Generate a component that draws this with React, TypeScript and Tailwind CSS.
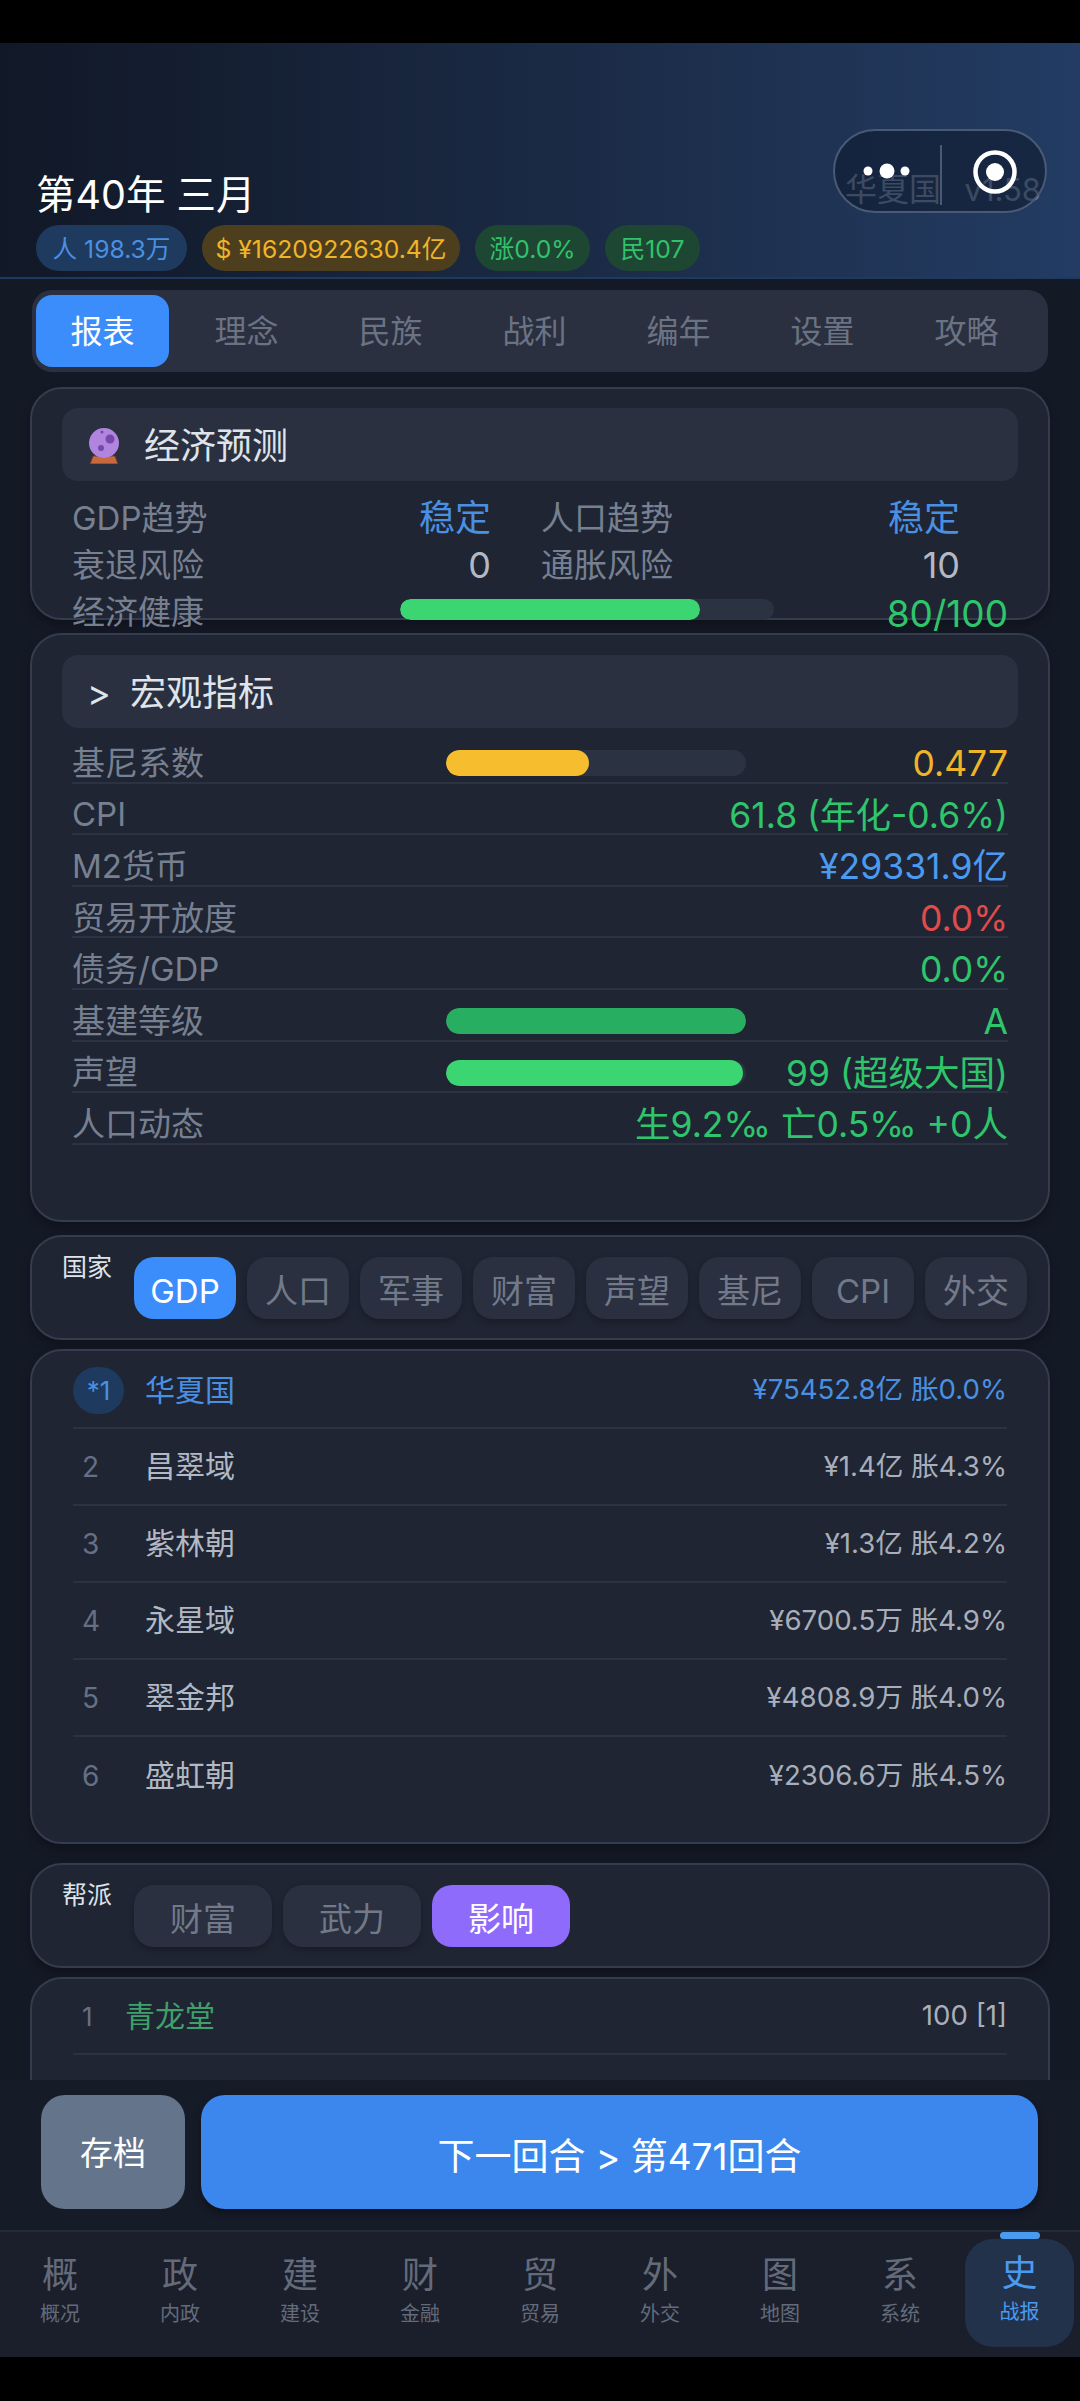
const CJK = "font-['Inter','Noto_Sans_CJK_SC',sans-serif]";

function Pill({ className, children }: { className: string; children: React.ReactNode }) {
  return <div className={`h-[46px] rounded-[23px] flex items-center justify-center text-[24.7px] pt-[3px] ${className}`}>{children}</div>;
}

function Bar({ width, fill, color, h }: { width: number; fill: number; color: string; h: string }) {
  return (
    <div className={`rounded-full bg-[#2b3242] overflow-hidden ${h}`} style={{ width }}>
      <div className={`h-full rounded-full ${color}`} style={{ width: fill }} />
    </div>
  );
}

function Metric({ label, value, color, bar }: { label: string; value: string; color: string; bar?: React.ReactNode }) {
  return (
    <div className="h-[51.6px] pt-[13px] border-b-2 border-[#2b3242] flex items-center text-[33px] leading-none">
      <div className="w-[374px] text-[#778091] shrink-0">{label}</div>
      {bar}
      <div className={`ml-auto text-[35.5px] pt-[1px] ${color}`}>{value}</div>
    </div>
  );
}

function Chip({ label, active, w, tone }: { label: string; active?: boolean; w: string; tone?: string }) {
  return (
    <div className={`h-[62px] rounded-[20px] flex items-center justify-center text-[33px] leading-none shrink-0 ${w} ${active ? `${tone} text-white` : "bg-[#2a3040] text-[#727a8a] shadow-[0_3px_6px_rgba(0,0,0,0.25)]"}`}>
      <span className="pt-[6px]">{label}</span>
    </div>
  );
}

function Rank({ n, name, value }: { n: number; name: string; value: string }) {
  return (
    <div className="h-[77px] border-b-2 border-[#2b3242] last:border-b-0 flex items-center">
      <div className="w-[72px] pl-[9px] text-[28px] text-[#667084]">{n}</div>
      <div className="text-[30px] text-[#b3b9c4]">{name}</div>
      <div className="ml-auto text-[27.6px] text-[#a8afbb]">{value}</div>
    </div>
  );
}

const tabs = ["理念", "民族", "战利", "编年", "设置", "攻略"];
const chips = ["人口", "军事", "财富", "声望", "基尼", "CPI", "外交"];
const ranks = [
  { n: 2, name: "昌翠域", value: "¥1.4亿 胀4.3%" },
  { n: 3, name: "紫林朝", value: "¥1.3亿 胀4.2%" },
  { n: 4, name: "永星域", value: "¥6700.5万 胀4.9%" },
  { n: 5, name: "翠金邦", value: "¥4808.9万 胀4.0%" },
  { n: 6, name: "盛虹朝", value: "¥2306.6万 胀4.5%" },
];
const nav = [
  ["概", "概况"], ["政", "内政"], ["建", "建设"], ["财", "金融"], ["贸", "贸易"], ["外", "外交"], ["图", "地图"], ["系", "系统"],
];

export default function App() {
  return (
    <div className={`w-[1080px] h-[2401px] bg-black flex flex-col overflow-hidden font-normal ${CJK}`}>
      <div className="h-[43px] shrink-0 bg-black" />

      <header className="relative h-[236px] shrink-0 bg-gradient-to-r from-[#111827] to-[#233c63] border-b-2 border-[#1f3a60] px-[36px] pt-[127px]">
        <div className="text-[39.5px] leading-[50px] text-white">第40年 三月</div>
        <div className="mt-[5px] flex gap-[15px]">
          <Pill className="w-[151px] bg-[#1e3a5f] text-[#4a90e2]">人 198.3万</Pill>
          <Pill className="w-[258px] bg-[#4d3f1e] text-[#f0b429]">$ ¥1620922630.4亿</Pill>
          <Pill className="w-[115px] bg-[#1d4733] text-[#31c26b]">涨0.0%</Pill>
          <Pill className="w-[95px] bg-[#1d4733] text-[#31c26b]">民107</Pill>
        </div>
        <div className="absolute left-[845px] top-[127px] w-[196px] flex justify-between text-[32px] leading-[40px] text-[#8093ae] whitespace-nowrap">
          <span>华夏国</span>
          <span className="text-[31px]">v1.58</span>
        </div>
        <div className="absolute left-[833px] top-[86px] w-[214px] h-[84px] rounded-[42px] border-2 border-[#4a5a75] bg-[#0f1a2e]/60">
          <div className="absolute left-[105px] top-[14px] w-[2px] h-[60px] bg-[#4a5a75]" />
          <svg className="absolute left-0 top-0" width="210" height="80" viewBox="0 0 210 80">
            <circle cx="33" cy="40" r="4.5" fill="#fff" />
            <circle cx="52" cy="40" r="7.5" fill="#fff" />
            <circle cx="70" cy="40" r="4.5" fill="#fff" />
            <circle cx="160" cy="41" r="19.5" fill="none" stroke="#fff" strokeWidth="4.5" />
            <circle cx="160" cy="41" r="9" fill="#fff" />
          </svg>
        </div>
      </header>

      <main className="h-[1801px] shrink-0 bg-[#141926] overflow-hidden px-[30px] pt-[11px]">
        <div className="mx-[2px] h-[82px] rounded-[20px] bg-[#2a3040] pl-[4px] flex items-center gap-[11px] text-[32px]">
          <div className="w-[133px] h-[72px] rounded-[16px] bg-[#3a8dfb] text-white flex items-center justify-center pt-[2px]">报表</div>
          {tabs.map((t) => (
            <div key={t} className="w-[133px] text-center text-[#6b7383] pt-[2px]">{t}</div>
          ))}
        </div>

        <section className="mt-[15px] h-[233px] rounded-[32px] border-2 border-[#353c4d] bg-[#1f2533] px-[30px] pt-[19px] shadow-[0_6px_10px_rgba(0,0,0,0.25)]">
          <div className="h-[73px] rounded-[16px] bg-[#2a3040] flex items-center pl-[27px] pt-[2px] text-[#dfe3ea] text-[36px]">
            <svg width="30" height="36" viewBox="0 0 30 36" className="mr-[25px]">
              <path d="M4 28h22l3 8H1z" fill="#c9683f" stroke="#6b3a2a" strokeWidth="1" />
              <circle cx="15" cy="15" r="15" fill="#b085dd" />
              <circle cx="21" cy="11" r="4.5" fill="#7747ac" />
              <circle cx="12" cy="20" r="3" fill="#7747ac" />
              <circle cx="13" cy="4" r="1.5" fill="#7747ac" />
            </svg>
            经济预测
          </div>
          <div className="px-[10px] pt-[14px] text-[33px] leading-[47px]">
            <div className="grid grid-cols-2 gap-x-[50px] pr-[48px]">
              <div className="flex justify-between"><span className="text-[#778091]">GDP趋势</span><span className="text-[36px] text-[#4a90e2]">稳定</span></div>
              <div className="flex justify-between"><span className="text-[#778091]">人口趋势</span><span className="text-[36px] text-[#4a90e2]">稳定</span></div>
              <div className="flex justify-between"><span className="text-[#778091]">衰退风险</span><span className="text-[36px] text-[#b3b9c4]">0</span></div>
              <div className="flex justify-between"><span className="text-[#778091]">通胀风险</span><span className="text-[36px] text-[#b3b9c4]">10</span></div>
            </div>
            <div className="flex items-center h-[46px]">
              <div className="w-[328px] text-[#778091]">经济健康</div>
              <div className="-mt-[6px]"><Bar width={374} fill={300} color="bg-[#3bd671]" h="h-[21px]" /></div>
              <div className="ml-auto text-[37px] text-[#2ec56c] pt-[2px]">80/100</div>
            </div>
          </div>
        </section>

        <section className="mt-[13px] h-[589px] rounded-[32px] border-2 border-[#353c4d] bg-[#1f2533] px-[30px] pt-[20px] shadow-[0_6px_10px_rgba(0,0,0,0.25)]">
          <div className="h-[73px] rounded-[16px] bg-[#2a3040] flex items-center pl-[25px] pt-[2px] text-[#dfe3ea] text-[36px]">
            <span className="w-[43px]">&gt;</span>宏观指标
          </div>
          <div className="px-[10px] pt-[4px]">
            <Metric label="基尼系数" value="0.477" color="text-[#f0b429]" bar={<Bar width={300} fill={143} color="bg-[#f6bd2f]" h="h-[26px]" />} />
            <Metric label="CPI" value="61.8 (年化-0.6%)" color="text-[#2ec56c]" />
            <Metric label="M2货币" value="¥29331.9亿" color="text-[#4a9af0]" />
            <Metric label="贸易开放度" value="0.0%" color="text-[#e04b4b]" />
            <Metric label="债务/GDP" value="0.0%" color="text-[#2ec56c]" />
            <Metric label="基建等级" value="A" color="text-[#2ec56c]" bar={<Bar width={300} fill={300} color="bg-[#27ae60]" h="h-[26px]" />} />
            <Metric label="声望" value="99 (超级大国)" color="text-[#2ec56c]" bar={<Bar width={300} fill={297} color="bg-[#3bd671]" h="h-[26px]" />} />
            <Metric label="人口动态" value="生9.2‰ 亡0.5‰ +0人" color="text-[#2ec56c]" />
          </div>
        </section>

        <section className="mt-[13px] h-[105px] rounded-[32px] border-2 border-[#353c4d] bg-[#1f2533] pl-[30px] pt-[20px] flex items-start shadow-[0_6px_10px_rgba(0,0,0,0.25)]">
          <div className="w-[72px] text-[25px] leading-[16px] pt-[2px] text-[#dfe3ea] shrink-0">国家</div>
          <div className="flex gap-[11px]">
            <Chip label="GDP" active w="w-[102px]" tone="bg-[#3a8dfb]" />
            {chips.map((c) => <Chip key={c} label={c} w="w-[102px]" />)}
          </div>
        </section>

        <section className="mt-[9px] h-[495px] rounded-[32px] border-2 border-[#353c4d] bg-[#1f2533] px-[41px] pt-[2px] shadow-[0_6px_10px_rgba(0,0,0,0.25)]">
          <div className="h-[76px] border-b-2 border-[#2b3242] flex items-center">
            <div className="w-[51px] h-[47px] rounded-[24px] bg-[#1e3a5f] text-[#4a90e2] text-[26px] flex items-center justify-center mr-[21px]">*1</div>
            <div className="text-[30px] text-[#4a90e2]">华夏国</div>
            <div className="ml-auto text-[27.6px] text-[#4a90e2]">¥75452.8亿 胀0.0%</div>
          </div>
          {ranks.map((r) => <Rank key={r.n} {...r} />)}
        </section>

        <section className="mt-[19px] h-[105px] rounded-[32px] border-2 border-[#353c4d] bg-[#1f2533] pl-[30px] pt-[20px] flex items-start shadow-[0_6px_10px_rgba(0,0,0,0.25)]">
          <div className="w-[72px] text-[25px] leading-[16px] pt-[2px] text-[#dfe3ea] shrink-0">帮派</div>
          <div className="flex gap-[11px]">
            <Chip label="财富" w="w-[138px]" />
            <Chip label="武力" w="w-[138px]" />
            <Chip label="影响" active w="w-[138px]" tone="bg-[#8f6bfb]" />
          </div>
        </section>

        <section className="mt-[9px] h-[140px] rounded-t-[32px] border-2 border-[#353c4d] bg-[#1f2533] px-[41px]">
          <div className="h-[76px] border-b-2 border-[#2b3242] flex items-center">
            <div className="w-[52px] pl-[9px] text-[26px] text-[#667084]">1</div>
            <div className="text-[30px] text-[#3fa06a]">青龙堂</div>
            <div className="ml-auto text-[27.6px] text-[#a8afbb]">100 [1]</div>
          </div>
        </section>
      </main>

      <footer className="h-[150px] shrink-0 bg-[#161b28] px-[41px] pt-[15px] flex gap-[16px] items-start">
        <div className="w-[144px] h-[114px] rounded-[24px] bg-[#64748b] text-white text-[33px] pt-[4px] flex items-center justify-center">存档</div>
        <div className="w-[837px] h-[114px] rounded-[24px] bg-[#3b87ee] text-white text-[37px] pt-[10px] flex items-center justify-center shadow-[0_4px_8px_rgba(0,0,0,0.35)]">下一回合 &gt; 第471回合</div>
      </footer>

      <nav className="relative h-[127px] shrink-0 bg-[#1b1f2b] border-t-2 border-[#232a3a] flex">
        {nav.map(([a, b]) => (
          <div key={a} className="w-[120px] pt-[21px] flex flex-col items-center">
            <div className="text-[36px] leading-[44px] text-[#636b7b]">{a}</div>
            <div className="text-[20px] leading-[28px] mt-[3px] text-[#636b7b]">{b}</div>
          </div>
        ))}
        <div className="relative ml-[5px] mt-[7px] w-[109px] h-[108px] rounded-[28px] bg-[#22324a] flex flex-col items-center pt-[12px]">
          <div className="absolute -top-[7px] w-[40px] h-[7px] rounded-full bg-[#4a9af0]" />
          <div className="text-[36px] leading-[44px] text-[#4a9af0]">史</div>
          <div className="text-[20px] leading-[28px] mt-[3px] text-[#4a9af0]">战报</div>
        </div>
      </nav>

      <div className="flex-1 bg-black" />
    </div>
  );
}
